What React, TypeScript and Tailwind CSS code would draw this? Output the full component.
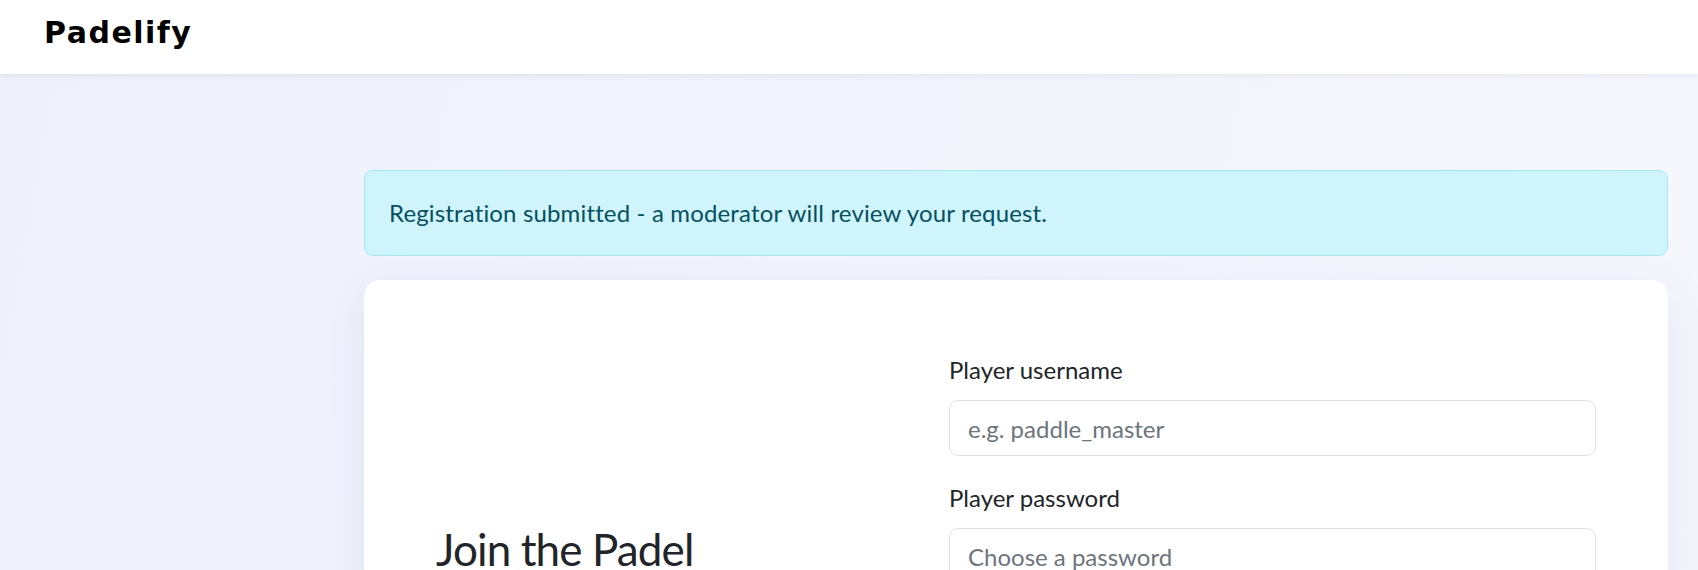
import React from "react";

const bodyFont = { fontFamily: "Lato, 'Noto Sans', sans-serif" };

function Field({ label, placeholder, type = "text" }: { label: string; placeholder: string; type?: string }) {
  return (
    <div className="mb-[24px]">
      <label className="mb-[12px] block text-[24px] leading-[36px] text-[#212529]">{label}</label>
      <input
        type={type}
        placeholder={placeholder}
        className="block h-[56px] w-full rounded-[9px] border-[1.5px] border-[#dee2e6] bg-white px-[18px] text-[24px] text-[#212529] outline-none placeholder:text-[#6c757d]"
      />
    </div>
  );
}

export default function App() {
  return (
    <div
      className="min-h-screen bg-[linear-gradient(100deg,#eef1fc_0%,#f3f5fd_60%,#f6f7fd_100%)]"
      style={bodyFont}
    >
      <nav className="relative z-10 h-[74px] bg-white pl-[44px] pt-[15px] shadow-[0_2px_6px_rgba(30,40,90,0.08)]">
        <span
          className="text-[30px] font-bold leading-[36px] tracking-[1.5px] text-black"
          style={{ fontFamily: "'DejaVu Sans', Verdana, sans-serif" }}
        >
          Padelify
        </span>
      </nav>

      <main className="ml-[364px] mr-[30px] pt-[96px]">
        <div className="mb-[24px] rounded-[9px] border-[1.5px] border-[#9eeaf9] bg-[#cff4fc] px-[24px] py-[24px] text-[24px] leading-[36px] tracking-[0.15px] text-[#055160]">
          Registration submitted - a moderator will review your request.
        </div>

        <section className="flex items-start gap-[72px] rounded-[16px] bg-white p-[72px] shadow-[0_12px_48px_rgba(70,80,170,0.10)]">
          <div className="w-[441px] shrink-0 pt-[171px]">
            <h2 className="text-[44px] font-normal leading-[1.2] tracking-[-0.02em] text-[#212529]">Join the Padel</h2>
          </div>
          <form className="flex-1">
            <Field label="Player username" placeholder="e.g. paddle_master" />
            <Field label="Player password" placeholder="Choose a password" type="password" />
          </form>
        </section>
      </main>
    </div>
  );
}
